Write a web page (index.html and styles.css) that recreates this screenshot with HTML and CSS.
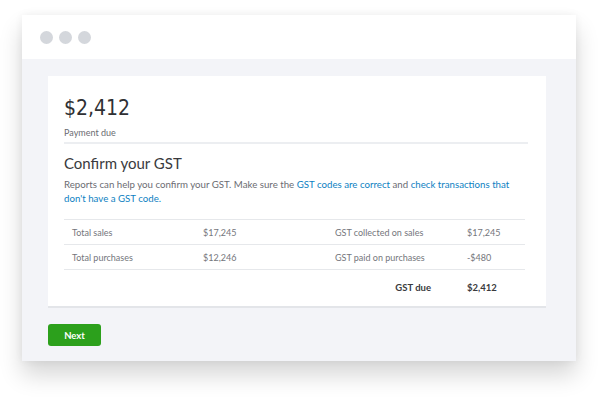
FILE: index.html
```html
<!DOCTYPE html>
<html lang="en">
  <head>
    <meta charset="UTF-8" />
    <meta name="viewport" content="width=device-width, initial-scale=1.0" />
    <title>Confirm your GST</title>
    <link rel="stylesheet" href="styles.css">
  </head>
  <body>
    <div class="window">
      <!-- Title bar -->
      <div class="titlebar">
        <span class="dot"></span>
        <span class="dot"></span>
        <span class="dot"></span>
      </div>

      <div class="content">
        <div class="card">
          <div class="amount">$2,412</div>
          <div class="amount-label">Payment due</div>

          <h2>Confirm your GST</h2>
          <p class="intro">Reports can help you confirm your GST. Make sure the <a href="#">GST codes are correct</a> and <a href="#">check transactions that don't have a GST code.</a></p>

          <table class="summary">
            <tr>
              <td class="c1">Total sales</td>
              <td class="c2">$17,245</td>
              <td class="c3">GST collected on sales</td>
              <td class="c4">$17,245</td>
            </tr>
            <tr>
              <td class="c1">Total purchases</td>
              <td class="c2">$12,246</td>
              <td class="c3">GST paid on purchases</td>
              <td class="c4">-$480</td>
            </tr>
            <tr class="total">
              <td class="c1"></td>
              <td class="c2"></td>
              <td class="c3">GST due</td>
              <td class="c4">$2,412</td>
            </tr>
          </table>
        </div>

        <button class="next">Next</button>
      </div>
    </div>
  </body>
</html>
```

FILE: styles.css
```css
body {
  margin: 0;
  background-color: #fff;
  font-family: Lato, "Open Sans", sans-serif;
  color: #393a3d;
  padding: 15px 24px 0 22px;
  min-height: 400px;
  box-sizing: border-box;
}
.window {
  background-color: #f3f4f8;
  box-shadow: 0 14px 22px rgba(0, 0, 0, 0.16), 0 0 8px rgba(0, 0, 0, 0.06);
  height: 346px;
}
.titlebar {
  background-color: #fff;
  height: 44px;
  display: flex;
  align-items: center;
  gap: 6px;
  padding-left: 18px;
}
.dot {
  width: 13px;
  height: 13px;
  border-radius: 50%;
  background-color: #d4d7dc;
}
.content {
  padding: 17px 30px 0 26px;
}
.card {
  background-color: #fff;
  height: 232px;
  box-sizing: border-box;
  padding: 18px 18px 0 16px;
  border-bottom: 2px solid #e3e5e9;
}
.amount {
  font-family: "DejaVu Sans", sans-serif;
  font-stretch: condensed;
  font-size: 21px;
  line-height: 28px;
  color: #2f3033;
}
.amount-label {
  font-size: 9px;
  color: #6b6c72;
  margin-top: 5px;
  padding-bottom: 4px;
  border-bottom: 2px solid #eceef1;
}
h2 {
  font-size: 15px;
  font-weight: normal;
  margin: 10px 0 5px;
  color: #393a3d;
}
.intro {
  font-size: 9.7px;
  line-height: 14px;
  color: #6b6c72;
  margin: 0;
  max-width: 450px;
}
.intro a {
  color: #0d7fc2;
  text-decoration: none;
}
.summary {
  width: 461px;
  table-layout: fixed;
  margin-top: 14px;
  border-collapse: collapse;
  font-size: 9px;
  color: #74767c;
}
.summary td {
  height: 24px;
  padding: 0;
  border-top: 1.5px solid #e6e8eb;
}
.summary .c1 { padding-left: 8px; width: 131px; }
.summary .c2 { width: 132px; }
.summary .c3 { width: 132px; }
.summary .total td {
  height: 34px;
  font-weight: bold;
  color: #393a3d;
  font-size: 9.5px;
}
.summary .total .c3 {
  text-align: right;
  padding-right: 36px;
}
.next {
  margin-top: 16px;
  background-color: #2ca01c;
  color: #fff;
  border: none;
  border-radius: 3px;
  font-family: Lato, sans-serif;
  font-weight: bold;
  font-size: 9.5px;
  width: 53px;
  height: 22px;
  cursor: pointer;
}
```
